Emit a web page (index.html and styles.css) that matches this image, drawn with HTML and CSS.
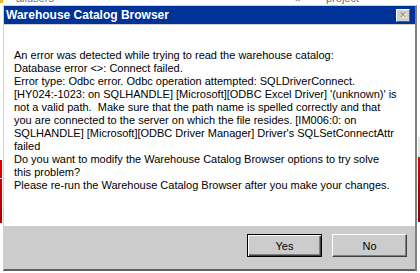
FILE: index.html
```html
<!DOCTYPE html>
<html lang="en">
<head>
  <meta charset="UTF-8">
  <title>Warehouse Catalog Browser</title>
  <link rel="stylesheet" href="styles.css">
</head>
<body>
  <div class="behind">
    <span class="behind-icon"></span>
    <span class="behind-text users">allusers</span>
    <span class="behind-text arrows">&laquo;</span>
    <span class="behind-text project">project</span>
  </div>

  <div class="row">
    <div class="side side-left">
      <div class="red red-a"></div>
      <div class="red red-b"></div>
    </div>

    <div class="dialog">
      <div class="titlebar">
        <span class="title">Warehouse Catalog Browser</span>
        <span class="close">&#x2715;</span>
      </div>
      <div class="message">
        <div>An error was detected while trying to read the warehouse catalog:</div>
        <div>Database error &lt;&gt;: Connect failed.</div>
        <div>Error type: Odbc error. Odbc operation attempted: SQLDriverConnect.</div>
        <div>[HY024:-1023: on SQLHANDLE] [Microsoft][ODBC Excel Driver] '(unknown)' is</div>
        <div>not a valid path.&nbsp; Make sure that the path name is spelled correctly and that</div>
        <div>you are connected to the server on which the file resides. [IM006:0: on</div>
        <div>SQLHANDLE] [Microsoft][ODBC Driver Manager] Driver's SQLSetConnectAttr</div>
        <div>failed</div>
        <div>Do you want to modify the Warehouse Catalog Browser options to try solve</div>
        <div>this problem?</div>
        <div>Please re-run the Warehouse Catalog Browser after you make your changes.</div>
      </div>
      <div class="buttons">
        <button class="btn default">Yes</button>
        <button class="btn">No</button>
      </div>
    </div>

    <div class="side side-right">
      <div class="grey-block"></div>
      <div class="red red-right"></div>
    </div>
  </div>
</body>
</html>
```

FILE: styles.css
```css
* {
  box-sizing: border-box;
  margin: 0;
  padding: 0;
}

body {
  width: 420px;
  height: 273px;
  overflow: hidden;
  background: #ffffff;
  font-family: 'Liberation Sans', Arial, sans-serif;
  font-size: 11px;
  color: #000;
}

/* window behind the dialog */
.behind {
  height: 5px;
  overflow: hidden;
  position: relative;
  display: flex;
}

.behind-icon {
  width: 3px;
  height: 3px;
  background: #e8b830;
}

.behind-text {
  color: #707070;
  font-size: 11px;
  line-height: 11px;
  margin-top: -7px;
}

.users {
  margin-left: 13px;
}

.arrows {
  margin-left: 240px;
}

.project {
  margin-left: 26px;
}

.row {
  display: flex;
  height: 268px;
}

.side {
  display: flex;
  flex-direction: column;
}

.side-left {
  width: 3px;
}

.side-right {
  width: 3px;
  padding-left: 1px;
}

.red {
  background: #d00000;
}

.red-a {
  margin-top: 155px;
  height: 18px;
  width: 2px;
}

.red-b {
  margin-top: 1px;
  height: 44px;
  width: 2px;
  background: linear-gradient(#d00000, #a00000);
}

.grey-block {
  margin-top: 132px;
  height: 20px;
  background: #e4e4e4;
}

.red-right {
  height: 65px;
  background: linear-gradient(#e00000, #900000);
}

/* dialog */
.dialog {
  width: 414px;
  height: 266px;
  border-top: 1px solid #d4d0c8;
  border-left: 1px solid #d4d0c8;
  border-right: 2px solid #808080;
  border-bottom: 2px solid #606060;
  display: flex;
  flex-direction: column;
  background: #fff;
}

.titlebar {
  height: 19px;
  background: #003399;
  border-bottom: 1px solid #d4d0c8;
  display: flex;
  align-items: center;
  justify-content: space-between;
  padding: 0 5px 0 2px;
}

.title {
  color: #fff;
  font-weight: bold;
  font-size: 12px;
}

.close {
  width: 14px;
  height: 13px;
  background: #d4d0c8;
  border-top: 1px solid #fff;
  border-left: 1px solid #fff;
  border-right: 1px solid #606060;
  border-bottom: 1px solid #606060;
  color: #8a8a8a;
  font-size: 9px;
  line-height: 11px;
  text-align: center;
  text-shadow: 1px 1px 0 #fff;
  font-family: 'DejaVu Sans', sans-serif;
}

.message {
  flex: 1;
  padding: 24px 0 0 10px;
  line-height: 13px;
  white-space: nowrap;
}

.buttons {
  height: 43px;
  background: #cccccc;
  display: flex;
  justify-content: flex-end;
  gap: 10px;
  padding: 8px 8px 0 0;
}

.btn {
  width: 75px;
  height: 23px;
  background: #cccccc;
  font-family: 'Liberation Sans', Arial, sans-serif;
  font-size: 11px;
  color: #000;
  border: 1px solid;
  border-color: #fff #404040 #404040 #fff;
  box-shadow: inset -1px -1px 0 #808080;
}

.btn.default {
  border: 1px solid #000;
  box-shadow: inset 1px 1px 0 #fff, inset -1px -1px 0 #404040, inset -2px -2px 0 #808080;
}
```
